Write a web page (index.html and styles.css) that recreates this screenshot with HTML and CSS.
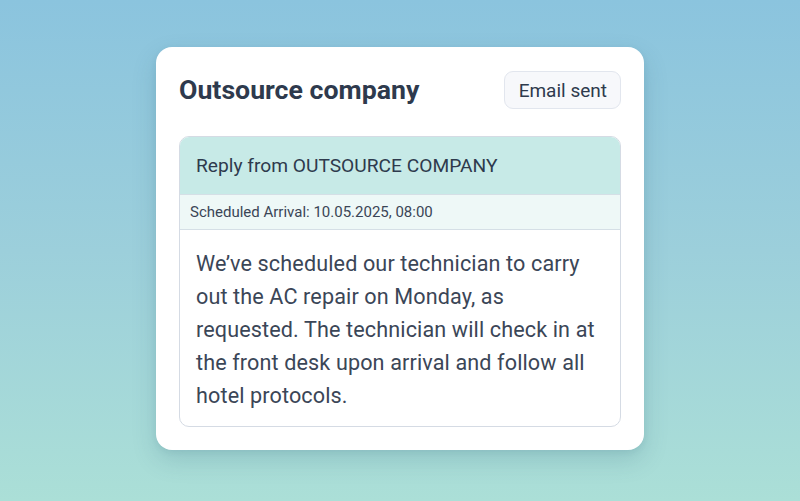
FILE: index.html
```html
<!DOCTYPE html>
<html>
<head>
<meta charset="utf-8">
<link rel="stylesheet" href="styles.css">
</head>
<body>
<div class="page">
  <div class="card">
    <div class="card-head">
      <h1 class="title">Outsource company</h1>
      <span class="badge">Email sent</span>
    </div>
    <div class="reply">
      <div class="reply-head">Reply from OUTSOURCE COMPANY</div>
      <div class="reply-meta">Scheduled Arrival: 10.05.2025, 08:00</div>
      <div class="reply-body">We’ve scheduled our technician to carry out the AC repair on Monday, as requested. The technician will check in at the front desk upon arrival and follow all hotel protocols.</div>
    </div>
  </div>
</div>
</body>
</html>
```
FILE: styles.css
```css
* { box-sizing: border-box; }
html, body { margin: 0; padding: 0; }
body {
  font-family: Roboto, "Liberation Sans", sans-serif;
  color: #334155;
}
.page {
  width: 800px;
  height: 501px;
  background: linear-gradient(180deg, #8bc4de 0%, #9ccfdb 50%, #abdfd7 100%);
  display: flex;
  justify-content: center;
  align-items: flex-start;
  padding-top: 47px;
}
.card {
  width: 488px;
  background: #fff;
  border-radius: 16px;
  padding: 24px 23px 23px 23px;
  box-shadow: 0 10px 25px rgba(40, 90, 110, 0.18), 0 2px 6px rgba(40, 90, 110, 0.08);
}
.card-head {
  display: flex;
  justify-content: space-between;
  align-items: center;
  margin-bottom: 27px;
}
.title {
  margin: 0;
  font-size: 26.7px;
  font-weight: 700;
  color: #2e3a4d;
}
.badge {
  height: 38px;
  padding: 0 13px 0 14px;
  display: flex;
  align-items: center;
  font-size: 19px;
  font-weight: 400;
  color: #2e3a4d;
  background: #f7f8fb;
  border: 1px solid #e2e6ee;
  border-radius: 9px;
}
.reply {
  border: 1px solid #d5dbe4;
  border-radius: 10px;
  overflow: hidden;
}
.reply-head {
  height: 58px;
  background: #c7eae7;
  display: flex;
  align-items: center;
  padding-left: 16px;
  font-size: 19.2px;
  font-weight: 400;
  color: #2e3a4d;
  border-bottom: 1px solid #d5dfe6;
}
.reply-meta {
  height: 35px;
  background: #eef8f7;
  display: flex;
  align-items: center;
  padding-left: 10px;
  font-size: 15px;
  color: #3a4556;
  border-bottom: 1px solid #d5dfe6;
}
.reply-body {
  padding: 17px 16px 14px 16px;
  font-size: 21.6px;
  line-height: 33px;
  letter-spacing: 0.12px;
  color: #3b4657;
}
```
